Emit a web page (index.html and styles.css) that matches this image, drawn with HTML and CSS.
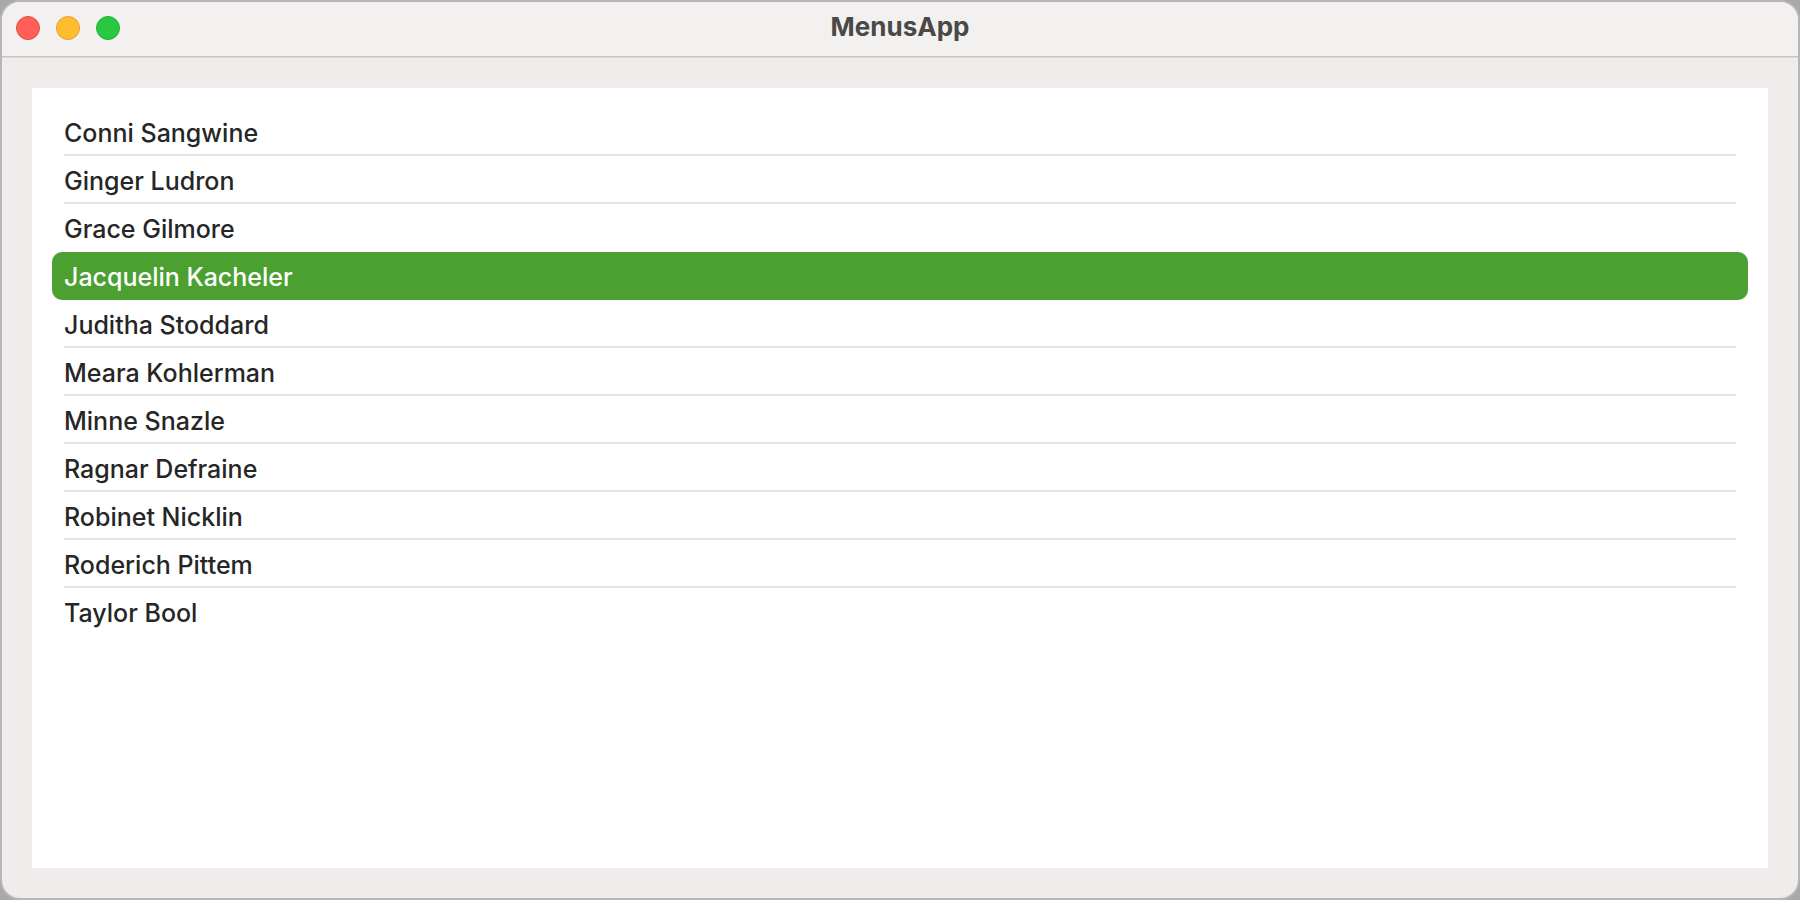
FILE: index.html
```html
<!DOCTYPE html>
<html lang="en">
<head>
<meta charset="utf-8">
<title>MenusApp</title>
<link rel="stylesheet" href="styles.css">
</head>
<body>
<div class="window">
  <header class="titlebar">
    <div class="controls">
      <button class="control close" type="button" aria-label="Close"></button>
      <button class="control minimize" type="button" aria-label="Minimize"></button>
      <button class="control zoom" type="button" aria-label="Zoom"></button>
    </div>
    <h1 class="title">MenusApp</h1>
  </header>
  <main class="content">
    <ul class="list">
      <li class="item"><button class="row" type="button">Conni Sangwine</button></li>
      <li class="item"><button class="row" type="button">Ginger Ludron</button></li>
      <li class="item before-selected"><button class="row" type="button">Grace Gilmore</button></li>
      <li class="item selected"><button class="row" type="button" aria-current="true">Jacquelin Kacheler</button></li>
      <li class="item"><button class="row" type="button">Juditha Stoddard</button></li>
      <li class="item"><button class="row" type="button">Meara Kohlerman</button></li>
      <li class="item"><button class="row" type="button">Minne Snazle</button></li>
      <li class="item"><button class="row" type="button">Ragnar Defraine</button></li>
      <li class="item"><button class="row" type="button">Robinet Nicklin</button></li>
      <li class="item"><button class="row" type="button">Roderich Pittem</button></li>
      <li class="item"><button class="row" type="button">Taylor Bool</button></li>
    </ul>
  </main>
</div>
</body>
</html>
```
FILE: styles.css
```css
* {
  box-sizing: border-box;
}

body {
  margin: 0;
  background: #a9a8a8;
  font-family: Inter, "Liberation Sans", sans-serif;
}

.window {
  display: flex;
  flex-direction: column;
  min-height: 100vh;
  border: 2px solid #b7b5b5;
  border-radius: 20px;
  background: #f0eceb;
  overflow: hidden;
}

.titlebar {
  display: grid;
  grid-template-columns: 1fr auto 1fr;
  align-items: start;
  height: 56px;
  padding: 14px 14px 0;
  border-bottom: 1px solid #dddad9;
  box-shadow: inset 0 -1px 0 #c6c4c3;
  background: #f3f1f0;
}

.controls {
  display: flex;
  gap: 16px;
}

.control {
  width: 24px;
  height: 24px;
  padding: 0;
  border: 1px solid;
  border-radius: 50%;
}

.close {
  background: #ff5f57;
  border-color: #e24b41;
}

.minimize {
  background: #febc2e;
  border-color: #e1a325;
}

.zoom {
  background: #28c840;
  border-color: #2dac2f;
}

.title {
  margin: 0;
  font-size: 26px;
  line-height: 22px;
  font-weight: 700;
  color: #4a4948;
}

.content {
  display: flex;
  flex: 1;
  padding: 30px;
}

.list {
  flex: 1;
  margin: 0;
  padding: 20px;
  list-style: none;
  background: #fff;
}

.item {
  height: 48px;
  padding: 0 12px;
  border-radius: 10px;
}

.row {
  display: block;
  width: 100%;
  height: 48px;
  padding: 4px 0 0;
  border: 0;
  border-bottom: 2px solid #e5e5e5;
  background: none;
  font: inherit;
  font-size: 25px;
  font-weight: 500;
  line-height: 42px;
  text-align: left;
  color: #262626;
}

.selected {
  background: #4ca032;
}

.selected .row {
  color: #fff;
}

.selected .row,
.before-selected .row,
.item:last-child .row {
  border-bottom-color: transparent;
}
```
